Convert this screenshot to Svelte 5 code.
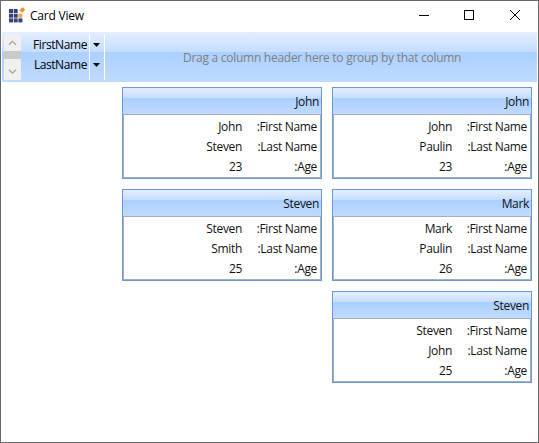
<script>
  const columns = [
    [
      { first: 'John', last: 'Steven', age: 23 },
      { first: 'Steven', last: 'Smith', age: 25 }
    ],
    [
      { first: 'John', last: 'Paulin', age: 23 },
      { first: 'Mark', last: 'Paulin', age: 26 },
      { first: 'Steven', last: 'John', age: 25 }
    ]
  ];
</script>

<div class="window">
  <header class="titlebar">
    <svg class="logo" width="17" height="17" viewBox="0 0 17 17">
      <g fill="#34437c">
        <rect x="0" y="2" width="4" height="4" /><rect x="4.7" y="2" width="4" height="4" />
        <rect x="0" y="6.7" width="4" height="4" /><rect x="4.7" y="6.7" width="4" height="4" />
        <rect x="0" y="11.4" width="4" height="4" /><rect x="4.7" y="11.4" width="4" height="4" />
        <rect x="9.4" y="11.4" width="4" height="4" />
      </g>
      <rect x="9.4" y="6.7" width="4" height="4" fill="#f7a23b" />
      <path d="M13.6 0.2 L16.2 2.6 L13.2 5.8 L10.4 3.2Z" fill="#f68b2c" />
    </svg>
    <span class="title">Card View</span>
    <svg class="controls" width="89" height="12" viewBox="0 0 89 12" fill="none" stroke="#000">
      <path d="M0 6.5H10" />
      <rect x="45.5" y="1.5" width="9" height="9" />
      <path d="M91 1 101 11 M101 1 91 11" />
    </svg>
  </header>

  <div class="groupbar">
    <div class="scroll">
      <svg width="17" height="17" viewBox="0 0 17 17" fill="none" stroke="#a3a3a3" stroke-width="1.3"><path d="M5 10.8 8.5 7.3 12 10.8" /></svg>
      <div class="thumb"></div>
      <svg width="17" height="21" viewBox="0 0 17 21" fill="none" stroke="#a3a3a3" stroke-width="1.3"><path d="M5 10.7 8.5 14.2 12 10.7" /></svg>
    </div>
    <div class="fields">
      {#each ['FirstName', 'LastName'] as name}
        <div class="field">{name}</div>
      {/each}
    </div>
    <div class="drops">
      {#each [0, 1] as i}
        <div class="drop"><svg width="7" height="4" viewBox="0 0 7 4"><path d="M0 0H7L3.5 4Z" fill="#000" /></svg></div>
      {/each}
    </div>
    <div class="hint"><span>Drag a column header here to group by that column</span></div>
  </div>

  <main class="cards">
    {#each columns as column}
      <div class="column">
        {#each column as card}
          <section class="card">
            <div class="head">{card.first}</div>
            <div class="body">
              <div class="row"><span class="value">{card.first}</span><span class="label">:First Name</span></div>
              <div class="row"><span class="value">{card.last}</span><span class="label">:Last Name</span></div>
              <div class="row"><span class="value">{card.age}</span><span class="label">:Age</span></div>
            </div>
          </section>
        {/each}
      </div>
    {/each}
  </main>
</div>

<style>
  :global(body) { margin: 0; background: #fff; }
  .window {
    box-sizing: border-box;
    width: 539px;
    height: 443px;
    border: 1px solid #6b696a;
    background: #fff;
    color: #111;
    font: 12px/20px "Open Sans", "Noto Sans", sans-serif;
    letter-spacing: -0.33px;
    white-space: nowrap;
    overflow: hidden;
  }
  .titlebar { display: flex; height: 31px; }
  .logo { margin: 6px 0 0 8px; }
  .title { margin: 5px 0 0 4px; color: #000; letter-spacing: -0.22px; }
  .controls { margin: 8px 30px 0 auto; overflow: visible; }
  .groupbar {
    display: flex;
    height: 50px;
    margin: 0 1px;
    background: linear-gradient(#e3efff 0, #c4dcff 20px, #abd0ff 20px, #c0daff 50px);
  }
  .scroll { width: 17px; height: 46px; margin: 2px 0 0 2px; background: #f0f0f0; }
  .scroll svg { display: block; }
  .thumb { height: 8px; background: #cacaca; }
  .fields {
    width: 66px;
    height: 46px;
    margin-top: 2px;
    padding-right: 2px;
    border-right: 1px solid #fff;
    text-align: right;
    color: #000;
    letter-spacing: -0.42px;
  }
  .field { height: 20px; line-height: 22px; }
  .drops { width: 14px; height: 45px; margin-top: 2px; padding-top: 1px; border-right: 1px solid #fff; }
  .drop { display: flex; padding-left: 3px; align-items: center; height: 20px; }
  .hint { flex: 1; padding: 16px 0 0 78px; color: #808080; letter-spacing: -0.27px; }
  .cards { display: flex; gap: 10px; padding: 5px 0 0 121px; }
  .column { display: flex; flex-direction: column; gap: 10px; }
  .card {
    box-sizing: border-box;
    width: 200px;
    height: 92px;
    border: 1px solid #6a99d3;
  }
  .head {
    height: 26px;
    padding-right: 2px;
    background: linear-gradient(#e3efff 0, #c4dcff 10.5px, #abd0ff 10.5px, #c0daff 26px);
    line-height: 28px;
    text-align: right;
  }
  .body {
    box-sizing: border-box;
    height: 64px;
    padding: 2px 3px 0 0;
    border: 1px solid #a9adb8;
  }
  .row { display: flex; justify-content: flex-end; height: 20px; }
  .label { width: 75px; text-align: right; }
</style>
